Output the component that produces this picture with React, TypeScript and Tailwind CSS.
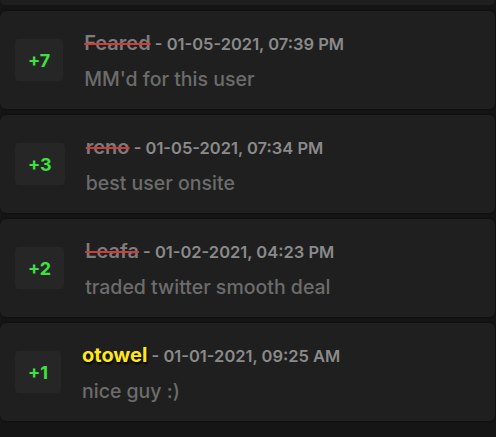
const reps = [
  { score: "+7", name: "Feared", banned: true, date: "01-05-2021, 07:39 PM", text: "MM'd for this user" },
  { score: "+3", name: "reno", banned: true, date: "01-05-2021, 07:34 PM", text: "best user onsite" },
  { score: "+2", name: "Leafa", banned: true, date: "01-02-2021, 04:23 PM", text: "traded twitter smooth deal" },
  { score: "+1", name: "otowel", banned: false, date: "01-01-2021, 09:25 AM", text: "nice guy :)" },
]

function RepCard({ rep }: { rep: (typeof reps)[number] }) {
  return (
    <div className="flex h-[98px] items-center gap-[21px] rounded-md bg-[#1f1f1f] pl-[15px] shadow-[0_0_3px_rgba(0,0,0,0.5)]">
      <div className="flex h-[42px] items-center justify-center rounded-sm bg-[#262626] px-[13px] text-[18px] font-bold text-[#3ee23e]">
        {rep.score}
      </div>
      <div className="flex flex-col gap-[12px] pt-[3px]">
        <div className="text-[16.5px] font-semibold leading-[22px] text-[#8a8a8a]">
          {rep.banned ? (
            <span className="text-[20px] text-[#7c7c7c] line-through decoration-[#d43a3a] decoration-2">{rep.name}</span>
          ) : (
            <span className="text-[20px] font-bold text-[#ffe81a] [text-shadow:1px_2px_2px_rgba(0,0,0,0.9)]">{rep.name}</span>
          )}
          <span> - {rep.date}</span>
        </div>
        <div className="text-[19.5px] font-medium leading-[24px] text-[#6c6c6c]">{rep.text}</div>
      </div>
    </div>
  )
}

export default function App() {
  return (
    <div className="h-[437px] w-[496px] overflow-hidden bg-[#151515] pr-[1px]" style={{ fontFamily: "Inter, 'Noto Sans', sans-serif" }}>
      <div className="flex flex-col gap-[6px]">
        <div className="h-[5px] rounded-b-md bg-[#1f1f1f]" />
        {reps.map((r) => (
          <RepCard key={r.name} rep={r} />
        ))}
      </div>
    </div>
  )
}
